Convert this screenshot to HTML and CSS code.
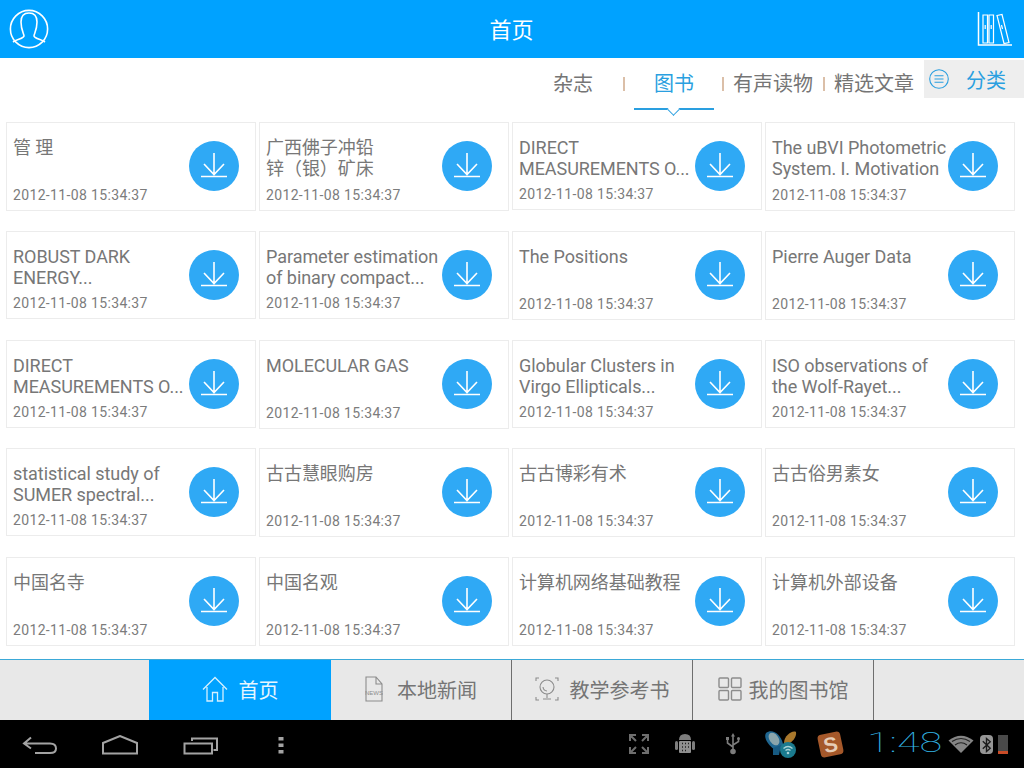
FILE: index.html
```html
<!DOCTYPE html>
<html lang="zh">
<head>
  <meta charset="UTF-8" />
  <title>首页</title>
  <link rel="stylesheet" href="styles.css">
</head>
<body>

<svg class="defs" width="0" height="0">
  <symbol id="dl" viewBox="0 0 50 50">
    <circle cx="25" cy="25" r="25" fill="#2fa9f5" />
    <path d="M12 35.5H38M25 12V33.5M15 23L25 33.5L35 23" fill="none" stroke="#fff" stroke-width="1.6" />
  </symbol>
</svg>

<div class="page">
  <header class="topbar">
    <svg class="user-icon" width="40" height="40" viewBox="0 0 40 40" fill="none" stroke="#fff" stroke-width="1.6">
      <circle cx="20" cy="20" r="18.6" />
      <path d="M4 33C8 30 14 30 15 27C15 25 12 21 12 13C12 7 15 4 20 4C25 4 28 7 28 13C28 21 25 25 25 27C26 30 32 30 36 33" />
    </svg>
    <h1 class="title">首页</h1>
    <svg class="shelf-icon" width="36" height="36" viewBox="0 0 36 36" fill="none" stroke="#fff" stroke-width="1.2">
      <path d="M2.5 1V34H36" stroke-width="1.5" />
      <path d="M7 4H11.500V32H7ZM13 4H17.500V32H13ZM21 4.500L26 3.500L33 31.500L28 32.500Z" />
      <path d="M9.200 14V18M15.200 14V18M25.500 14L26.500 18" />
    </svg>
  </header>

  <nav class="tabs">
    <a class="tab">杂志</a>
    <span class="sep wide"></span>
    <a class="tab active">图书</a>
    <span class="sep narrow"></span>
    <a class="tab">有声读物</a>
    <span class="sep wide"></span>
    <a class="tab">精选文章</a>
    <div class="cat">
      <svg width="20" height="20" viewBox="0 0 20 20" fill="none" stroke="#2a9fe0" stroke-width="1.1">
        <circle cx="10" cy="10" r="9.3" />
        <path d="M5.500 6.800H14.500M5.500 10H14.500M5.500 13.200H14.500" />
      </svg>
      <span>分类</span>
    </div>
  </nav>

  <main class="shelf">
    <div class="grid">
      <div class="card"><div class="info"><p class="name">管 理</p><p class="date">2012-11-08 15:34:37</p></div><svg class="dl"><use href="#dl" /></svg></div>
      <div class="card"><div class="info"><p class="name">广西佛子冲铅<br>锌（银）矿床</p><p class="date">2012-11-08 15:34:37</p></div><svg class="dl"><use href="#dl" /></svg></div>
      <div class="card short"><div class="info"><p class="name">DIRECT<br>MEASUREMENTS O...</p><p class="date">2012-11-08 15:34:37</p></div><svg class="dl"><use href="#dl" /></svg></div>
      <div class="card"><div class="info"><p class="name">The uBVI Photometric<br>System. I. Motivation</p><p class="date">2012-11-08 15:34:37</p></div><svg class="dl"><use href="#dl" /></svg></div>

      <div class="card short"><div class="info"><p class="name">ROBUST DARK<br>ENERGY...</p><p class="date">2012-11-08 15:34:37</p></div><svg class="dl"><use href="#dl" /></svg></div>
      <div class="card short"><div class="info"><p class="name">Parameter estimation<br>of binary compact...</p><p class="date">2012-11-08 15:34:37</p></div><svg class="dl"><use href="#dl" /></svg></div>
      <div class="card"><div class="info"><p class="name">The Positions</p><p class="date">2012-11-08 15:34:37</p></div><svg class="dl"><use href="#dl" /></svg></div>
      <div class="card"><div class="info"><p class="name">Pierre Auger Data</p><p class="date">2012-11-08 15:34:37</p></div><svg class="dl"><use href="#dl" /></svg></div>

      <div class="card short"><div class="info"><p class="name">DIRECT<br>MEASUREMENTS O...</p><p class="date">2012-11-08 15:34:37</p></div><svg class="dl"><use href="#dl" /></svg></div>
      <div class="card"><div class="info"><p class="name">MOLECULAR GAS</p><p class="date">2012-11-08 15:34:37</p></div><svg class="dl"><use href="#dl" /></svg></div>
      <div class="card short"><div class="info"><p class="name">Globular Clusters in<br>Virgo Ellipticals...</p><p class="date">2012-11-08 15:34:37</p></div><svg class="dl"><use href="#dl" /></svg></div>
      <div class="card short"><div class="info"><p class="name">ISO observations of<br>the Wolf-Rayet...</p><p class="date">2012-11-08 15:34:37</p></div><svg class="dl"><use href="#dl" /></svg></div>

      <div class="card short"><div class="info"><p class="name">statistical study of<br>SUMER spectral...</p><p class="date">2012-11-08 15:34:37</p></div><svg class="dl"><use href="#dl" /></svg></div>
      <div class="card"><div class="info"><p class="name">古古慧眼购房</p><p class="date">2012-11-08 15:34:37</p></div><svg class="dl"><use href="#dl" /></svg></div>
      <div class="card"><div class="info"><p class="name">古古博彩有术</p><p class="date">2012-11-08 15:34:37</p></div><svg class="dl"><use href="#dl" /></svg></div>
      <div class="card"><div class="info"><p class="name">古古俗男素女</p><p class="date">2012-11-08 15:34:37</p></div><svg class="dl"><use href="#dl" /></svg></div>

      <div class="card"><div class="info"><p class="name">中国名寺</p><p class="date">2012-11-08 15:34:37</p></div><svg class="dl"><use href="#dl" /></svg></div>
      <div class="card"><div class="info"><p class="name">中国名观</p><p class="date">2012-11-08 15:34:37</p></div><svg class="dl"><use href="#dl" /></svg></div>
      <div class="card"><div class="info"><p class="name">计算机网络基础教程</p><p class="date">2012-11-08 15:34:37</p></div><svg class="dl"><use href="#dl" /></svg></div>
      <div class="card"><div class="info"><p class="name">计算机外部设备</p><p class="date">2012-11-08 15:34:37</p></div><svg class="dl"><use href="#dl" /></svg></div>
    </div>
  </main>

  <nav class="bottom">
    <a class="bt on">
      <svg width="26" height="26" viewBox="0 0 26 26" fill="none" stroke="#d5f0ff" stroke-width="1.3">
        <path d="M1 13.500L13 1.500L25 13.500M5 11V25H10.500V16.500H15.500V25H21V11" />
      </svg>
      <span>首页</span>
    </a>
    <a class="bt news">
      <svg width="18" height="26" viewBox="0 0 18 26" fill="none" stroke="#8c8c8c" stroke-width="1.1">
        <path d="M1 1H11L17 8V25H1ZM11 1V8H17" />
        <text x="9" y="19" font-size="6" text-anchor="middle" fill="#8c8c8c" stroke="none" font-family="Liberation Sans Narrow, Liberation Sans, sans-serif">NEWS</text>
      </svg>
      <span>本地新闻</span>
    </a>
    <a class="bt">
      <svg width="24" height="24" viewBox="0 0 24 24" fill="none" stroke="#8c8c8c" stroke-width="1.1">
        <path d="M1 4V1H4M20 1H23V4M1 20V23H4M20 23H23V20" />
        <circle cx="12" cy="10" r="7" />
        <path d="M12 17V21M8 22H16M8 10A4.500 4.500 0 0 0 12 14" />
      </svg>
      <span>教学参考书</span>
    </a>
    <a class="bt lib">
      <svg width="24" height="24" viewBox="0 0 24 24" fill="none" stroke="#8c8c8c" stroke-width="1.4">
        <rect x="1" y="1" width="9.500" height="9.500" rx="1" />
        <rect x="13.500" y="1" width="9.500" height="9.500" rx="1" />
        <rect x="1" y="13.500" width="9.500" height="9.500" rx="1" />
        <rect x="13.500" y="13.500" width="9.500" height="9.500" rx="1" />
      </svg>
      <span>我的图书馆</span>
    </a>
  </nav>

  <footer class="sysbar">
    <div class="softkeys">
      <svg width="36" height="20" viewBox="0 0 36 20" fill="none" stroke="#a3a3a3" stroke-width="2">
        <path d="M9 2.500L2 8.500L9 13.500M2 8.500H28Q34 8.500 34 13.500Q34 18 28 18H13" />
      </svg>
      <svg width="38" height="20" viewBox="0 0 38 20" fill="none" stroke="#a3a3a3" stroke-width="2">
        <path d="M2 18.500V8L19 1L36 8V18.500Z" />
      </svg>
      <svg class="recent-key" width="36" height="20" viewBox="0 0 36 20" fill="none" stroke="#a3a3a3" stroke-width="2">
        <path d="M1.500 8.500H29V18.500H1.500ZM9 6V3.500H34V15H30.500" />
      </svg>
      <svg class="menu-key" width="6" height="18" viewBox="0 0 6 18" fill="#a3a3a3">
        <rect width="5" height="3.500" x="0.500" y="1" />
        <rect width="5" height="3.500" x="0.500" y="7.500" />
        <rect width="5" height="3.500" x="0.500" y="14" />
      </svg>
    </div>
    <div class="status">
      <svg class="s-expand" width="22" height="22" viewBox="0 0 22 22" fill="none" stroke="#6e6e6e" stroke-width="2">
        <path d="M2 8V2H8M2 2L8 8M20 8V2H14M20 2L14 8M2 14V20H8M2 20L8 14M20 14V20H14M20 20L14 14" />
      </svg>
      <svg class="s-android" width="22" height="24" viewBox="0 0 22 24">
        <path d="M5 8Q5 2 11 2Q17 2 17 8Z" fill="#7d7d7d" />
        <rect x="5" y="9" width="12" height="12" rx="1" fill="#8f8f8f" />
        <rect x="1" y="9" width="3" height="9" rx="1.500" fill="#7d7d7d" />
        <rect x="18" y="9" width="3" height="9" rx="1.500" fill="#7d7d7d" />
        <path d="M8 11.500h1M11 11.500h1M14 11.500h1M8 15h1M11 15h1M14 15h1M8 18.500h1M11 18.500h1" stroke="#222" stroke-width="1.3" />
      </svg>
      <svg class="s-usb" width="16" height="22" viewBox="0 0 16 22" fill="none" stroke="#7d7d7d" stroke-width="1.6">
        <path d="M8 2V18M8 14L2.500 10V6.500M8 12L13.500 8.500V6" />
        <circle cx="8" cy="18.500" r="2" fill="#7d7d7d" />
        <path d="M8 0L10 3.500H6Z" fill="#7d7d7d" stroke="none" />
        <rect x="1" y="4" width="3" height="3" fill="#7d7d7d" stroke="none" />
        <circle cx="13.500" cy="5.500" r="1.500" fill="#7d7d7d" stroke="none" />
      </svg>
      <svg class="s-fly" width="34" height="28" viewBox="0 0 34 28">
        <path d="M2 3C8 -2 17 4 19 14C19 19 13 21 10 19C5 16 -1 8 2 3Z" fill="#1f6690" />
        <ellipse cx="10" cy="9" rx="4.500" ry="7" fill="#8ba5ab" transform="rotate(-35 10 9)" />
        <path d="M9 18L17 15L15 25L9 25Z" fill="#175a82" />
        <path d="M20 13C20 6 28 0 32 2C33 7 28 13 22 15Z" fill="#a9782c" />
        <circle cx="24" cy="20" r="8" fill="#1a7a8e" />
        <path d="M19.500 18.500Q24 14.500 28.500 18.500M21.500 20.500Q24 18.500 26.500 20.500" fill="none" stroke="#a7d2d6" stroke-width="1.4" />
        <circle cx="24" cy="23" r="1.300" fill="#a7d2d6" />
      </svg>
      <div class="s-sogou">S</div>
      <div class="clock"><span>1:48</span></div>
      <svg class="s-wifi" width="26" height="20" viewBox="0 0 26 20" fill="#858585">
        <path d="M13 19L0.500 6.500Q13 -3 25.500 6.500Z" />
        <path d="M4 7.500Q13 1.500 22 7.500M7 11Q13 6.500 19 11" fill="none" stroke="#222" stroke-width="1.1" />
      </svg>
      <div class="s-bt">
        <svg width="13" height="20" viewBox="0 0 14 20" fill="none" stroke="#1c1c1c" stroke-width="1.5">
          <path d="M3 6L11 13.500L7 17V3L11 6.500L3 14" />
        </svg>
      </div>
      <div class="s-batt"><i></i></div>
    </div>
  </footer>
</div>

</body>
</html>
```

FILE: styles.css
```css
body {
  margin: 0;
  font-family: Roboto, "Noto Sans CJK SC", sans-serif;
  background: #fff;
}
.defs {
  position: absolute;
}
.page {
  width: 1024px;
  height: 768px;
  display: flex;
  flex-direction: column;
  overflow: hidden;
}

/* top bar */
.topbar {
  height: 58px;
  flex: none;
  background: #00a2ff;
  display: flex;
  align-items: center;
  justify-content: space-between;
  padding: 0 12px 0 9px;
  box-sizing: border-box;
}
.title {
  margin: -2px 2px 0 0;
  font-size: 22px;
  font-weight: 400;
  color: #fff;
}

/* tabs */
.tabs {
  height: 64px;
  flex: none;
  display: flex;
  justify-content: flex-end;
  align-items: flex-start;
}
.tab {
  width: 80px;
  height: 50px;
  line-height: 52px;
  text-align: center;
  font-size: 20px;
  color: #757575;
  position: relative;
}
.tab.active {
  color: #2a9fe0;
  border-bottom: 2px solid #2a9fe0;
}
.tab.active::after {
  content: "";
  position: absolute;
  left: 35px;
  top: 47px;
  width: 8px;
  height: 8px;
  background: #fff;
  border-right: 1.5px solid #2a9fe0;
  border-bottom: 1.5px solid #2a9fe0;
  transform: rotate(45deg);
}
.sep {
  width: 2px;
  height: 14px;
  margin: 19px 9px 0;
  background: #dbbfa8;
}
.sep.wide {
  margin-left: 10px;
}
.sep.narrow {
  margin-left: 8px;
}
.cat {
  width: 100px;
  height: 38px;
  margin: 2px 0 0 10px;
  padding-left: 5px;
  box-sizing: border-box;
  background: #eee;
  display: flex;
  align-items: center;
  gap: 17px;
  font-size: 20px;
  color: #2a9fe0;
}

/* book grid */
.shelf {
  flex: 1;
  overflow: hidden;
}
.grid {
  display: grid;
  grid-template-columns: repeat(4, 250px);
  grid-template-rows: 109px 109px 108px 109px 89px;
  column-gap: 3px;
  padding-left: 6px;
}
.card {
  height: 89px;
  border: 1px solid #ececec;
  box-sizing: border-box;
  display: flex;
  align-items: flex-start;
  padding-left: 6px;
}
.card.short {
  height: 88px;
}
.info {
  width: 176px;
  height: 100%;
  display: flex;
  flex-direction: column;
  justify-content: space-between;
  flex: none;
}
.name {
  margin: 14px 0 0;
  font-size: 18px;
  line-height: 21px;
  letter-spacing: -0.05px;
  color: #777;
  white-space: nowrap;
}
.date {
  margin: 0 0 5px;
  font-size: 14px;
  line-height: 20px;
  color: #7c7c7c;
  letter-spacing: 0.35px;
  white-space: nowrap;
}
.dl {
  width: 50px;
  height: 50px;
  flex: none;
  margin-top: 18px;
}

/* bottom nav */
.bottom {
  height: 61px;
  flex: none;
  background: #e8e8e8;
  border-top: 1px solid #3ba9d8;
  box-sizing: border-box;
  display: flex;
  padding-left: 149px;
}
.bt {
  width: 181px;
  padding-bottom: 2px;
  border-right: 1px solid #6e6e6e;
  box-sizing: border-box;
  display: flex;
  align-items: center;
  justify-content: center;
  gap: 11px;
  font-size: 20px;
  color: #757575;
}
.bt.on {
  background: #00a2ff;
  color: #e6f6ff;
  border-right: 0;
  width: 182px;
}
.bt.news {
  gap: 14px;
}
.bt.lib {
  gap: 7px;
}

/* android bar */
.sysbar {
  height: 48px;
  flex: none;
  background: #000;
  display: flex;
  justify-content: space-between;
  align-items: center;
}
.softkeys {
  display: flex;
  align-items: center;
  gap: 43px;
  padding: 2px 0 0 22px;
}
.recent-key {
  margin-left: 1px;
}
.menu-key {
  margin-left: 16px;
}
.status {
  display: flex;
  align-items: center;
  padding-right: 16px;
}
.s-expand { margin-right: 24px; }
.s-android { margin-right: 29px; }
.s-usb { margin-right: 23px; }
.s-fly { margin-right: 21px; }
.s-sogou {
  width: 23px;
  height: 23px;
  margin-right: 25px;
  border-radius: 4px;
  background: #a5582a;
  color: #e6cdb8;
  font: 700 21px/23px "Liberation Sans", sans-serif;
  text-align: center;
  transform: rotate(-12deg);
}
.clock {
  width: 81px;
  height: 40px;
  font-size: 27px;
  font-weight: 100;
  line-height: 38px;
  color: #33b5e5;
}
.clock span {
  display: inline-block;
  transform: scaleX(1.53);
  transform-origin: left center;
}
.s-wifi { margin-right: 6px; }
.s-bt {
  width: 13px;
  height: 19px;
  border-radius: 4px;
  background: #969696;
  margin-right: 5px;
  display: flex;
  justify-content: center;
}
.s-batt {
  width: 10px;
  height: 19px;
  background: #4a4a4a;
  position: relative;
}
.s-batt i {
  position: absolute;
  left: 0;
  right: 0;
  bottom: 0;
  height: 3px;
  background: #c94c28;
}
```
